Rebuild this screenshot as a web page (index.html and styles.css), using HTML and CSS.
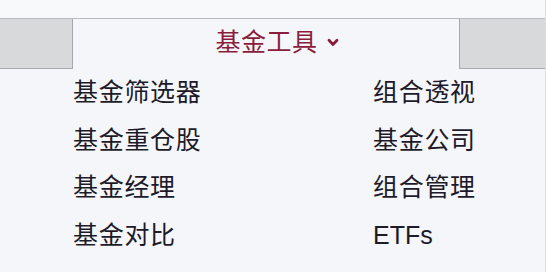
FILE: index.html
```html
<!DOCTYPE html>
<html lang="zh">
<head>
<meta charset="utf-8">
<link rel="stylesheet" href="styles.css">
</head>
<body>
<div class="page">
  <div class="top-strip"></div>
  <div class="tabs">
    <div class="tab tab-left"></div>
    <div class="tab tab-active">
      <span class="tab-title">基金工具</span>
      <svg class="chevron" width="12" height="9" viewBox="0 0 12 9"><path d="M2 2.2 L6 6.5 L10 2.2" fill="none" stroke="#8a1d3c" stroke-width="2.8" stroke-linecap="round" stroke-linejoin="round"/></svg>
    </div>
    <div class="tab tab-right"></div>
  </div>
  <div class="menu">
    <div class="item">基金筛选器</div>
    <div class="item">组合透视</div>
    <div class="item">基金重仓股</div>
    <div class="item">基金公司</div>
    <div class="item">基金经理</div>
    <div class="item">组合管理</div>
    <div class="item">基金对比</div>
    <div class="item latin">ETFs</div>
  </div>
</div>
</body>
</html>
```
FILE: styles.css
```css
html, body {
  margin: 0;
  padding: 0;
}
body {
  background: #f5f6f9;
  font-family: "Liberation Sans", "Noto Sans CJK SC", sans-serif;
}
.page {
  width: 546px;
  height: 272px;
  border-right: 1px solid #dcdde2;
  background: #f5f6f9;
  box-sizing: border-box;
}
.top-strip {
  height: 18px;
  background: #f8f9fb;
  border-bottom: 1px solid #b9babd;
}
.tabs {
  display: flex;
  height: 50px;
}
.tab {
  box-sizing: border-box;
}
.tab-left {
  width: 73px;
  background: #d8d9db;
  border-right: 1px solid #a8a8aa;
  border-bottom: 1px solid #a8a8aa;
}
.tab-right {
  width: 86px;
  background: #d8d9db;
  border-left: 1px solid #a8a8aa;
  border-bottom: 1px solid #a8a8aa;
}
.tab-active {
  flex: 1;
  display: flex;
  align-items: center;
  justify-content: center;
  padding-left: 22px;
  padding-bottom: 8px;
  gap: 9px;
}
.tab-title {
  font-family: "Noto Sans CJK SC", sans-serif;
  font-size: 25px;
  line-height: 30px;
  letter-spacing: 0.5px;
  color: #8a1d3c;
}
.chevron {
  margin-top: 4px;
}
.menu {
  display: grid;
  grid-template-columns: 300px 1fr;
  grid-auto-rows: 47.5px;
  padding-left: 73px;
}
.item {
  font-size: 25px;
  line-height: 47.5px;
  letter-spacing: 0.7px;
  color: #1d1a29;
  white-space: nowrap;
}
.item.latin {
  letter-spacing: 0;
  padding-left: 0;
}
```
